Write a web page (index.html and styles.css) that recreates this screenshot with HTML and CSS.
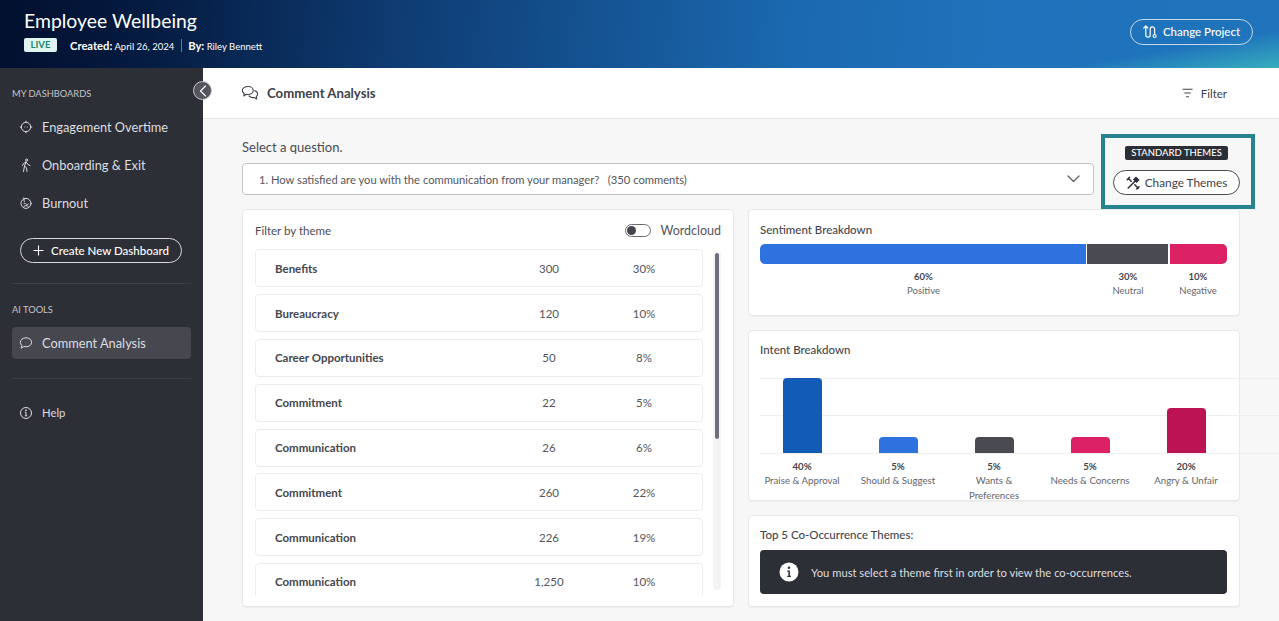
FILE: index.html
```html
<!DOCTYPE html>
<html lang="en">
<head>
<meta charset="utf-8">
<title>Comment Analysis</title>
<link rel="stylesheet" href="styles.css">
</head>
<body>
<header class="topbar">
  <div class="project">
    <h1 class="project-title">Employee Wellbeing</h1>
    <div class="project-meta">
      <span class="live">LIVE</span>
      <span class="meta-item"><b>Created:</b> April 26, 2024</span>
      <span class="meta-sep"></span>
      <span class="meta-item"><b>By:</b> Riley Bennett</span>
    </div>
  </div>
  <button class="change-project">
    <svg width="16" height="16" viewBox="0 0 16 16" fill="none" stroke="currentColor" stroke-width="1.2" stroke-linecap="round" stroke-linejoin="round"><path d="M1.800 4 3.800 2 5.800 4M3.800 2V11a2.200 2.200 0 0 0 4.400 0V5a2.200 2.200 0 0 1 4.400 0V10"/><circle cx="12.600" cy="12" r="1.500"/></svg>
    Change Project
  </button>
</header>
<div class="layout">
  <aside class="sidebar">
    <button class="collapse" aria-label="Collapse">
      <svg width="8" height="12" viewBox="0 0 8 12" fill="none" stroke="currentColor" stroke-width="1.1" stroke-linecap="round" stroke-linejoin="round"><path d="M6.500 1 1.500 6l5 5"/></svg>
    </button>
    <div class="side-label">MY DASHBOARDS</div>
    <a class="side-link">
      <svg class="side-icon" viewBox="0 0 14 14" fill="none" stroke="currentColor" stroke-width="1"><circle cx="7" cy="7" r="4.700"/><path d="M7 .8v2.200M7 11v2.200M.8 7H3M11 7h2.200M5.400 7h.8M7.800 7h.8"/></svg>
      Engagement Overtime
    </a>
    <a class="side-link">
      <svg class="side-icon" viewBox="0 0 14 14" fill="none" stroke="currentColor" stroke-width="1" stroke-linecap="round" stroke-linejoin="round"><circle cx="7.600" cy="2" r="1"/><path d="M7 4 5.500 8 7.500 10 8 13.500M5.500 8 4.500 13.500M7 4 9.500 7 11 7.500M7 4 4.500 5.500 3.500 7.500"/></svg>
      Onboarding &amp; Exit
    </a>
    <a class="side-link">
      <svg class="side-icon" viewBox="0 0 14 14" fill="none" stroke="currentColor" stroke-width="1" stroke-linecap="round"><circle cx="7" cy="7.400" r="5"/><path d="M4.800 1.800C6 3.400 4.200 4.600 5.200 5.600M4.500 8c1-1.400 2-.8 2.600 0s1.600 1 2.400 0M5 10.200c1.200-.8 2.800-.8 4 0"/></svg>
      Burnout
    </a>
    <button class="create">
      <svg width="11" height="11" viewBox="0 0 11 11" fill="none" stroke="currentColor" stroke-width="1.1"><path d="M5.500 .5v10M.5 5.500h10"/></svg>
      Create New Dashboard
    </button>
    <hr class="side-rule">
    <div class="side-label side-label-ai">AI TOOLS</div>
    <a class="side-link side-link-active">
      <svg class="side-icon" viewBox="0 0 14 14" fill="none" stroke="currentColor" stroke-width="1" stroke-linejoin="round"><path d="M7 1.800c3.200 0 5.600 1.900 5.600 4.500S10.200 10.800 7 10.800c-.8 0-1.500-.1-2.200-.3L2.200 12.200l.6-2.800C1.900 8.600 1.400 7.500 1.400 6.300 1.400 3.700 3.800 1.800 7 1.800z"/></svg>
      Comment Analysis
    </a>
    <hr class="side-rule side-rule-low">
    <a class="side-link side-link-help">
      <svg class="side-icon" viewBox="0 0 14 14" fill="none" stroke="currentColor" stroke-width="1"><circle cx="7" cy="7" r="5.500"/><path d="M7 6.200v3.600M5.800 6.200H7M5.800 9.800h2.400"/><circle cx="7" cy="4.200" r=".5" fill="currentColor"/></svg>
      Help
    </a>
  </aside>
  <main class="main">
    <div class="page-head">
      <div class="page-title">
        <svg width="18" height="16" viewBox="0 0 18 16" fill="none" stroke="#3f4148" stroke-width="1.100" stroke-linejoin="round"><path d="M7 1.500c3 0 5.200 1.700 5.200 4s-2.200 4-5.200 4c-.6 0-1.200-.1-1.800-.2L2.800 11l.4-2.500C2 7.700 1.300 6.700 1.300 5.500c0-2.300 2.700-4 5.700-4z"/><path d="M13.300 5.500c2 .6 3.300 1.900 3.300 3.500 0 1-.5 1.900-1.300 2.500l.4 2.500-2.500-1.500c-2.300.4-4.400-.3-5.500-1.800"/></svg>
        <span>Comment Analysis</span>
      </div>
      <div class="filter">
        <svg width="11" height="10" viewBox="0 0 12 10" fill="none" stroke="#3f4148" stroke-width="1.100"><path d="M.5 1h11M2.500 5h7M4.500 9h3"/></svg>
        Filter
      </div>
    </div>
    <div class="content">
      <div class="question-row">
        <div class="question">
          <label class="question-label">Select a question.</label>
          <div class="select">
            <span>1. How satisfied are you with the communication from your manager?&nbsp;&nbsp; (350 comments)</span>
            <svg width="13" height="8" viewBox="0 0 13 8" fill="none" stroke="#5e6068" stroke-width="1.300" stroke-linecap="round" stroke-linejoin="round"><path d="M1 1l5.500 5.500L12 1"/></svg>
          </div>
        </div>
        <div class="themes-box">
          <span class="themes-tag">STANDARD THEMES</span>
          <button class="themes-btn">
            <svg width="14" height="14" viewBox="0 0 14 14" fill="none" stroke="#2d2f36" stroke-width="1.500" stroke-linecap="round"><path d="M2.200 12 9 5.200M5.200 5.200 2.500 2.500M1.300 3.600 3.600 1.300M8.800 8.800l3.400 3.400"/><path d="M8 3.500 10 1.500l2.500 2.500-2 2z" fill="#2d2f36"/><path d="M10.800 13 13 10.800"/></svg>
            Change Themes
          </button>
        </div>
      </div>
      <div class="columns">
        <section class="card theme-card">
          <div class="theme-head">
            <span>Filter by theme</span>
            <span class="wordcloud"><i class="toggle"><i class="knob"></i></i>Wordcloud</span>
          </div>
          <div class="theme-body">
            <div class="theme-list">
              <div class="theme-row"><b>Benefits</b><span>300</span><span>30%</span></div>
              <div class="theme-row"><b>Bureaucracy</b><span>120</span><span>10%</span></div>
              <div class="theme-row"><b>Career Opportunities</b><span>50</span><span>8%</span></div>
              <div class="theme-row"><b>Commitment</b><span>22</span><span>5%</span></div>
              <div class="theme-row"><b>Communication</b><span>26</span><span>6%</span></div>
              <div class="theme-row"><b>Commitment</b><span>260</span><span>22%</span></div>
              <div class="theme-row"><b>Communication</b><span>226</span><span>19%</span></div>
              <div class="theme-row"><b>Communication</b><span>1,250</span><span>10%</span></div>
            </div>
            <div class="scroll-track"><div class="scroll-thumb"></div></div>
          </div>
        </section>
        <div class="side-cards">
          <section class="card sentiment">
            <h2 class="card-title">Sentiment Breakdown</h2>
            <div class="sent-bar">
              <div class="sent-seg sent-pos"></div>
              <div class="sent-seg sent-neu"></div>
              <div class="sent-seg sent-neg"></div>
            </div>
            <div class="sent-labels">
              <div class="stat stat-pos"><b>60%</b><span>Positive</span></div>
              <div class="stat stat-neu"><b>30%</b><span>Neutral</span></div>
              <div class="stat stat-neg"><b>10%</b><span>Negative</span></div>
            </div>
          </section>
          <section class="card intent">
            <h2 class="card-title">Intent Breakdown</h2>
            <div class="chart">
              <div class="grid-line"></div>
              <div class="grid-line"></div>
              <div class="grid-line"></div>
              <div class="bars">
                <div class="bar-col"><div class="bar bar-a"></div></div>
                <div class="bar-col"><div class="bar bar-b"></div></div>
                <div class="bar-col"><div class="bar bar-c"></div></div>
                <div class="bar-col"><div class="bar bar-d"></div></div>
                <div class="bar-col"><div class="bar bar-e"></div></div>
              </div>
            </div>
            <div class="intent-labels">
              <div class="stat"><b>40%</b><span>Praise &amp; Approval</span></div>
              <div class="stat"><b>5%</b><span>Should &amp; Suggest</span></div>
              <div class="stat"><b>5%</b><span>Wants &amp; Preferences</span></div>
              <div class="stat"><b>5%</b><span>Needs &amp; Concerns</span></div>
              <div class="stat"><b>20%</b><span>Angry &amp; Unfair</span></div>
            </div>
          </section>
          <section class="card cooc">
            <h2 class="card-title">Top 5 Co-Occurrence Themes:</h2>
            <div class="notice">
              <svg width="20" height="20" viewBox="0 0 20 20"><circle cx="10" cy="10" r="9.500" fill="#fff"/><circle cx="10" cy="5.800" r="1.200" fill="#2d2f36"/><path d="M8.300 8.600h2.600v5.200h1v1.200H8.200v-1.200h1.200V9.800H8.300z" fill="#2d2f36"/></svg>
              <span>You must select a theme first in order to view the co-occurrences.</span>
            </div>
          </section>
        </div>
      </div>
    </div>
  </main>
</div>
</body>
</html>
```

FILE: styles.css
```css
* { box-sizing: border-box; }
html, body { margin: 0; height: 621px; overflow: hidden; }
body { font-family: "Lato", "Open Sans", sans-serif; color: #4a4b52; background: #f7f7f7; }
button { font-family: inherit; cursor: pointer; }
b { font-weight: 700; }

.topbar {
  height: 68px; display: flex; align-items: center; justify-content: space-between;
  padding: 0 26px 5px 24px; color: #fff;
  background:
    linear-gradient(170deg, rgba(56,176,190,0) 87%, rgba(56,176,190,.95) 100%),
    linear-gradient(95deg, #020f2e 0%, #051c42 12%, #0e3a70 30%, #145291 46%, #1b69b0 62%, #1f72bb 78%, #1f74bc 100%);
}
.project { margin-bottom: 2px; }
.project-title { margin: 0 0 5px; font-size: 19.400px; line-height: 24px; font-weight: 400; }
.project-meta { display: flex; align-items: center; font-size: 9.500px; height: 14px; }
.live { width: 33px; height: 14px; margin-right: 13px; border-radius: 2px; background: #dff6f0; color: #1d8a6e; font-size: 9.500px; font-weight: 700; line-height: 14px; text-align: center; }
.meta-item b { font-size: 11.200px; }
.meta-sep { width: 1px; height: 13px; margin: 0 6px 0 7px; background: #5a7aa0; }
.change-project {
  width: 123px; height: 26px; display: flex; align-items: center; justify-content: center; gap: 5px;
  border: 1px solid #c7d7ea; border-radius: 13px; background: transparent; color: #fff; font-size: 11.500px; font-weight: 500; padding: 0 1px 0 0;
}

.layout { display: flex; height: 553px; }
.sidebar { position: relative; width: 203px; flex: none; padding: 20px 12px 0 12px; background: #2d2f36; color: #dcdde0; }
.collapse {
  position: absolute; top: 13px; right: -9px; width: 19px; height: 19px; padding: 0;
  display: flex; align-items: center; justify-content: center;
  border: 1px solid #c9cace; border-radius: 50%; background: #55565d; color: #fff;
}
.side-label { font-size: 9.300px; line-height: 12px; color: #c3c4c8; margin-bottom: 8px; }
.side-label-ai { margin-bottom: 11px; }
.side-link { display: flex; align-items: center; gap: 9px; height: 38px; padding-left: 7px; font-size: 12.800px; color: #dcdde0; }
.side-icon { width: 14px; height: 14px; flex: none; }
.create {
  display: flex; align-items: center; justify-content: center; gap: 7px;
  width: 162px; height: 25px; margin: 16px 0 0 8px; padding: 0;
  border: 1px solid #d8d9dc; border-radius: 13px; background: transparent; color: #fff; font-size: 11.500px; font-weight: 500;
}
.side-rule { height: 1px; margin: 20px 0; border: 0; background: #3d3f46; }
.side-rule-low { margin: 19px 0 15px; }
.side-link-active { height: 32px; border-radius: 4px; background: #47484f; }
.side-link-help { font-size: 11.300px; height: 37px; }

.main { flex: 1; min-width: 0; }
.page-head {
  height: 51px; display: flex; align-items: center; justify-content: space-between;
  padding: 0 52px 0 38px; background: #fff; border-bottom: 1px solid #e6e6e6;
}
.page-title { display: flex; align-items: center; gap: 8px; font-size: 13.200px; font-weight: 700; color: #3f4148; }
.filter { display: flex; align-items: center; gap: 8px; font-size: 11.500px; color: #3f4148; }
.content { padding: 0 39px; }
.question-row { height: 90px; display: flex; gap: 7px; margin-right: -15px; }
.question { flex: 1; min-width: 0; padding-top: 20px; }
.question-label { display: block; font-size: 13px; line-height: 16px; margin-bottom: 8px; color: #4a4b52; }
.select {
  height: 32px; display: flex; align-items: center; justify-content: space-between;
  padding: 0 13px 0 16px; background: #fff; border: 1px solid #c3c4c9; border-radius: 4px; font-size: 11.200px; color: #55565d;
}
.themes-box {
  width: 154px; height: 75px; margin-top: 15px; flex: none;
  display: flex; flex-direction: column; align-items: center; justify-content: flex-start;
  padding: 8px 3px 0 0; border: 4px solid #26838f;
}
.themes-tag { height: 14px; padding: 0 6.500px; border-radius: 2px; background: #2d2f36; color: #fff; font-size: 9.500px; line-height: 14px; font-weight: 500; }
.themes-btn {
  width: 127px; height: 25px; margin-top: 10px; padding: 0;
  display: flex; align-items: center; justify-content: center; gap: 5px; flex: none;
  border: 1px solid #4a4b52; border-radius: 13px; background: #fff; color: #3f4148; font-size: 11.800px;
}

.columns { display: flex; gap: 14px; height: 398px; }
.card { background: #fff; border: 1px solid #e8e8e8; border-radius: 4px; box-shadow: 0 1px 1px rgba(0,0,0,.04); }
.theme-card { width: 492px; height: 398px; flex: none; padding: 0 12px; }
.theme-head { height: 39.400px; display: flex; align-items: center; justify-content: space-between; font-size: 11.500px; padding-top: 2px; color: #4a4b52; }
.wordcloud { display: flex; align-items: center; gap: 9px; font-size: 12.500px; color: #55565d; }
.toggle { display: block; width: 26px; height: 13px; border: 1px solid #6a6b72; border-radius: 7px; background: #fff; padding: 1px; }
.knob { display: block; width: 9px; height: 9px; border-radius: 50%; background: #45464d; }
.theme-body { display: flex; gap: 10px; height: 345.600px; overflow: hidden; }
.theme-list { width: 448px; flex: none; }
.theme-row {
  height: 38px; margin-bottom: 6.800px; display: grid; grid-template-columns: 226px 96px 94px; align-items: center;
  padding-left: 19px; background: #fff; border: 1px solid #ececec; border-radius: 4px; font-size: 11.500px; color: #55565d;
}
.theme-row span { text-align: center; }
.theme-row b { color: #45464d; }
.scroll-track { width: 9px; height: 339px; margin-top: 2px; border-radius: 4px; background: #f4f4f4; display: flex; justify-content: center; padding-top: 2px; }
.scroll-thumb { width: 4px; height: 186px; border-radius: 2px; background: #6e6f7c; }

.side-cards { flex: 1; min-width: 0; display: flex; flex-direction: column; gap: 14px; }
.card-title { margin: 0; font-size: 11.500px; line-height: 14px; font-weight: 500; color: #45464d; }
.sentiment { height: 107px; padding: 13px 12px 0 11px; }
.sent-bar { display: flex; gap: 1px; height: 20px; margin-top: 7px; border-radius: 5px; overflow: hidden; }
.sent-seg { height: 100%; }
.sent-pos { width: 326px; background: #2e72df; }
.sent-neu { width: 81px; background: #4a4b52; }
.sent-neg { flex: 1; margin-left: 1px; background: #db2064; }
.sent-labels { display: flex; margin-top: 6px; }
.stat { display: flex; flex-direction: column; align-items: center; text-align: center; font-size: 9.500px; line-height: 14px; color: #64656c; }
.stat b { color: #45464d; }
.stat-pos { width: 327px; }
.stat-neu { width: 82px; }
.stat-neg { flex: 1; }
.intent { height: 171px; padding: 12px 12px 0 11px; overflow: visible; }
.chart { position: relative; height: 76px; margin-top: 21px; margin-right: -60px; }
.grid-line { height: 1px; background: #eeeeee; margin-bottom: 36px; }
.grid-line:nth-child(2) { margin-bottom: 37px; }
.grid-line:nth-child(3) { margin-bottom: 0; }
.bars { position: absolute; left: -6px; bottom: 1px; display: flex; }
.bar-col { width: 96px; height: 75px; display: flex; align-items: flex-end; justify-content: center; }
.bar { width: 39px; border-radius: 4px 4px 0 0; }
.bar-a { height: 75px; background: #125cb8; }
.bar-b { height: 16px; background: #2e72df; }
.bar-c { height: 16px; background: #4a4b52; }
.bar-d { height: 16px; background: #db2064; }
.bar-e { height: 45px; background: #bc1355; }
.intent-labels { display: flex; margin-top: 5px; margin-left: -6px; }
.intent-labels .stat { flex: none; width: 96px; padding: 0 6px; font-size: 9.700px; line-height: 14.400px; }
.cooc { height: 92px; padding: 12px 12px 0 11px; }
.notice {
  height: 44px; margin-top: 8px; display: flex; align-items: center; gap: 12px; padding-left: 19px;
  border-radius: 4px; background: #2d2f36; color: #dcdde0; font-size: 11.200px;
}
```
